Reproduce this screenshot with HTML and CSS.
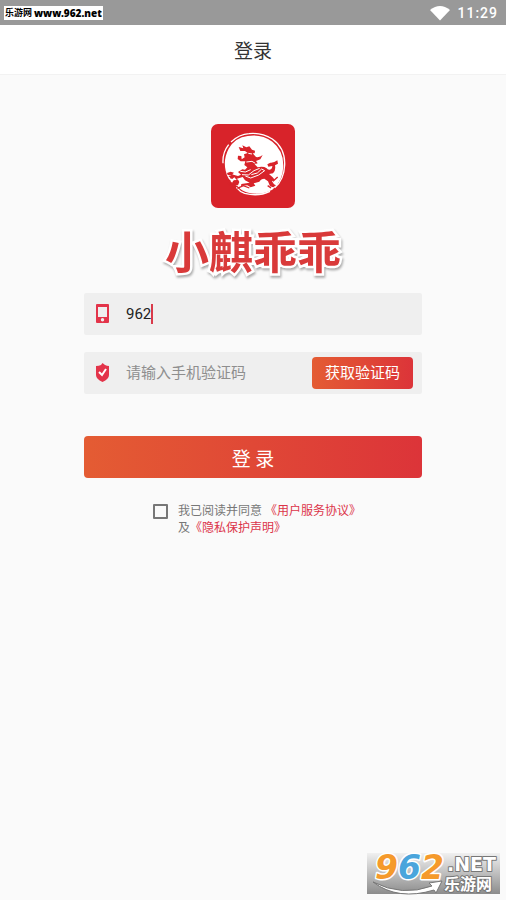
FILE: index.html
```html
<!DOCTYPE html>
<html lang="zh-CN">
<head>
<meta charset="utf-8">
<meta name="viewport" content="width=device-width, initial-scale=1">
<title>登录</title>
<link rel="stylesheet" href="styles.css">
</head>
<body>
<div class="status-bar">
  <span class="site-tag">乐游网 <b class="site-url">www.962.net</b></span>
  <span class="status-right">
    <svg class="wifi" viewBox="0 0 20 16" aria-hidden="true"><path d="M0 5Q10-3 20 5L10 15.500Z"/></svg>
    <time>11:29</time>
  </span>
</div>
<header class="title-bar"><h1>登录</h1></header>
<main class="login">
  <svg class="logo" viewBox="18 18 252 252" aria-hidden="true">
    <rect class="red" x="18" y="18" width="252" height="252" rx="21"/>
    <path class="white" d="M62 158Q54 124 71 92Q91 58 128 54Q169 47 202 71Q236 98 235 144Q234 189 202 215Q170 232 133 225Q110 220 98 205L88 199Q68 187 62 158Z"/>
    <path class="ring" d="M54 136Q52 104 71 80M78 72Q103 49 132 47Q169 43 202 63Q241 90 239 141Q237 186 209 209M195 220Q160 237 119 226Q104 221 94 208"/>
    <path class="red" d="M101 87L115 91L112 82L124 88L133 85L141 95L150 98L149 106L143 106L153 117Q165 119 173 111L166 124L153 129L158 136L149 139L158 148Q175 144 185 151Q188 156 194 155Q202 153 202 144L190 146L187 139L196 134Q207 135 217 127L219 137L210 142Q213 157 204 166L192 168L203 178L209 185L201 190L207 199L213 202L205 208L195 205L189 190L178 182Q168 182 163 191L146 196L151 203L137 208L127 202L108 204L109 198L134 194L120 187L113 177L96 182L101 190L97 201L85 201L81 194L87 187L96 187L88 178L77 180L70 174L85 170L99 174L108 170L99 162L112 154L120 155L127 148L118 141L121 130L107 130L98 123L99 113L109 114L110 124L119 118L117 109L128 105L120 99L106 99Z"/>
    <path class="red" d="M66 165L77 161L87 164L82 169L91 174L82 183L75 181L79 172L68 171ZM83 189L99 185L103 192L99 202L88 201Z"/>
    <path class="cut" d="M130 106L141 108M124 132L141 130L151 136M106 160L121 162L137 155M111 170L130 171L147 158L164 151M139 170L157 165L170 153L179 158L161 171L137 180L121 174"/>
    <path class="wisps" d="M97 211L115 203L133 210M188 203L198 210M204 190L218 177M65 181L76 190M69 195L81 204"/>
  </svg>
  <h2 class="brand">小麒乖乖</h2>
  <form class="form">
    <div class="field">
      <label class="field-icon" for="phone" aria-label="手机号">
        <svg viewBox="0 0 14 20"><path fill-rule="evenodd" d="M1 0H12Q13 0 13 1V18Q13 19 12 19H1Q0 19 0 18V1Q0 0 1 0ZM2 3V13H11V3ZM6.500 14A1.700 1.700 0 1 0 6.500 17.400A1.700 1.700 0 1 0 6.500 14Z"/></svg>
      </label>
      <input class="phone" id="phone" type="tel" value="962">
      <span class="caret"></span>
    </div>
    <div class="field">
      <label class="field-icon" for="code" aria-label="验证码">
        <svg viewBox="0 0 14 20"><path d="M6.500 0L9 2Q11 3 13 3V12Q13 16 6.500 19Q0 16 0 12V3Q3 3 5 2Z"/><path class="tick" d="M3 9L6 12L10 6"/></svg>
      </label>
      <input class="code" id="code" type="text" placeholder="请输入手机验证码">
      <button class="get-code" type="button">获取验证码</button>
    </div>
    <button class="submit" type="submit">登 录</button>
    <div class="terms">
      <input class="agree" id="agree" type="checkbox">
      <p><label for="agree">我已阅读并同意</label><a href="#terms">《用户服务协议》</a><br>及<a href="#privacy">《隐私保护声明》</a></p>
    </div>
  </form>
</main>
<svg class="watermark" viewBox="0 0 133 41" role="img" aria-label="962.NET 乐游网">
  <defs>
    <linearGradient id="plate" x2="0" y2="1"><stop stop-color="#f0f0f0"/><stop offset="1" stop-color="#8c8c8c"/></linearGradient>
  </defs>
  <rect width="133" height="41" fill="url(#plate)"/>
  <path class="swoosh" d="M6 29Q35 44 65 33L62 30L75 28L69 40L67 37Q31 48 6 29Z"/>
  <text class="digits" x="8" y="26"><tspan class="orange">9</tspan><tspan class="blue">6</tspan><tspan class="orange">2</tspan></text>
  <text class="net" x="80" y="18">.NET</text>
  <text class="cn" x="77" y="37">乐游网</text>
</svg>
</body>
</html>
```
FILE: styles.css
```css
* {
  box-sizing: border-box;
}

body {
  margin: 0;
  min-height: 100vh;
  position: relative;
  background: #fafafa;
  color: #333;
  font-family: Roboto, "Noto Sans CJK SC", sans-serif;
}

.status-bar {
  display: flex;
  justify-content: space-between;
  align-items: center;
  height: 25px;
  padding: 0 8px 0 4px;
  background: #999;
}

.site-tag {
  display: flex;
  align-items: center;
  gap: 2px;
  height: 14px;
  padding: 0 1px;
  background: #fff;
  color: #000;
  font: bold 9px/14px "Noto Sans CJK SC", sans-serif;
}

.site-url {
  font-family: "Noto Sans", sans-serif;
  font-size: 10px;
}

.status-right {
  display: flex;
  align-items: center;
  gap: 7px;
  color: #fff;
  font-size: 14px;
  font-weight: 500;
  letter-spacing: 1px;
}

.wifi {
  width: 20px;
  height: 16px;
  fill: #fff;
}

.title-bar {
  display: flex;
  align-items: center;
  justify-content: center;
  height: 50px;
  background: #fff;
  border-bottom: 1px solid #f2f2f2;
}

.title-bar h1 {
  margin: 0;
  font-size: 19px;
  font-weight: 400;
}

.login {
  display: flex;
  flex-direction: column;
  align-items: center;
  padding: 49px 84px 0;
}

.logo {
  width: 84px;
  height: 84px;
}

.red {
  fill: #d8232a;
}

.white {
  fill: #fff;
}

.ring,
.cut {
  fill: none;
  stroke: #fff;
  stroke-width: 4;
}

.cut {
  stroke-width: 3;
}

.wisps {
  fill: none;
  stroke: #d8232a;
  stroke-width: 4;
}

.brand {
  margin: 21px 0 0;
  color: #d93a3a;
  font-size: 44px;
  font-weight: 700;
  line-height: 50px;
  -webkit-text-stroke: 5px #fff;
  paint-order: stroke fill;
  filter: drop-shadow(1px 2px 1px #aaa);
}

.form {
  width: 100%;
  margin-top: 14px;
}

.field {
  display: flex;
  align-items: center;
  height: 42px;
  margin-bottom: 17px;
  padding: 0 9px 0 12px;
  background: #efefef;
  border-radius: 2px;
}

.field-icon {
  display: flex;
  width: 30px;
}

.field-icon svg {
  width: 14px;
  height: 20px;
  fill: #e3344a;
}

.field-icon .tick {
  fill: none;
  stroke: #fff;
  stroke-width: 2;
}

.field input {
  min-width: 0;
  padding: 0;
  border: 0;
  outline: 0;
  background: none;
  color: #222;
  font: 15px "Roboto", "Noto Sans CJK SC", sans-serif;
}

.field .phone {
  width: 3ch;
}

.field .code {
  flex: 1;
}

.code::placeholder {
  color: #8e8e8e;
}

.caret {
  width: 2px;
  height: 20px;
  background: #d93a4a;
}

button {
  border: 0;
  color: #fff;
  font-family: inherit;
  background: linear-gradient(90deg, #e45c33, #dc3439);
}

.get-code {
  width: 101px;
  height: 32px;
  padding: 0 0 3px;
  border-radius: 4px;
  font-size: 15px;
}

.submit {
  display: block;
  width: 100%;
  height: 42px;
  margin-top: 42px;
  border-radius: 4px;
  font-size: 19px;
}

.terms {
  display: flex;
  justify-content: center;
  gap: 10px;
  margin-top: 25px;
  padding-left: 8px;
  color: #777;
  font-size: 12px;
  line-height: 17px;
}

.terms p {
  margin: 0;
}

.terms label {
  margin-right: 3px;
}

.terms a {
  color: #dc3449;
  text-decoration: none;
}

.agree {
  appearance: none;
  width: 15px;
  height: 15px;
  margin: 1px 0 0;
  border: 2px solid #777;
  border-radius: 1px;
}

.agree:checked {
  background: #dc3449;
}

.watermark {
  position: absolute;
  right: 6px;
  bottom: 6px;
  width: 133px;
  height: 41px;
  overflow: visible;
}

.swoosh {
  fill: #fff;
  stroke: #777;
  stroke-width: 1;
}

.watermark text {
  paint-order: stroke fill;
  stroke-linejoin: round;
}

.digits {
  font: italic bold 33px "DejaVu Sans", sans-serif;
  stroke: #fff;
  stroke-width: 3;
}

.orange {
  fill: #f59a2c;
}

.blue {
  fill: #4aa5dc;
}

.net,
.cn {
  fill: #fff;
  stroke: #777;
  stroke-width: 2;
}

.net {
  font: bold 19px "DejaVu Sans", sans-serif;
}

.cn {
  font: bold 16px "Noto Sans CJK SC", sans-serif;
}
```
